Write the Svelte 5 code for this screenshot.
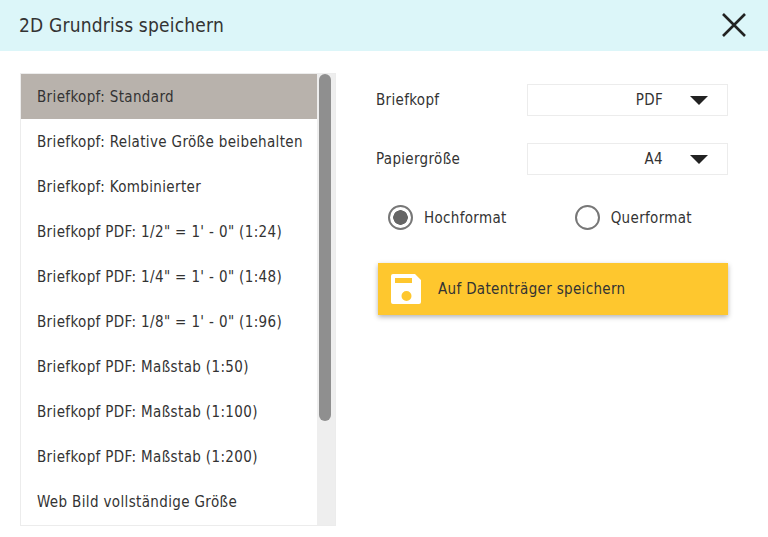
<script lang="ts">
  const templates = [
    "Briefkopf: Standard",
    "Briefkopf: Relative Größe beibehalten",
    "Briefkopf: Kombinierter",
    "Briefkopf PDF: 1/2\" = 1' - 0\" (1:24)",
    "Briefkopf PDF: 1/4\" = 1' - 0\" (1:48)",
    "Briefkopf PDF: 1/8\" = 1' - 0\" (1:96)",
    "Briefkopf PDF: Maßstab (1:50)",
    "Briefkopf PDF: Maßstab (1:100)",
    "Briefkopf PDF: Maßstab (1:200)",
    "Web Bild vollständige Größe",
  ];

  let selected = $state(0);
  let orientation = $state("portrait");
</script>

<div class="dialog">
  <header class="title-bar">
    <h1>2D Grundriss speichern</h1>
    <button type="button" class="close" aria-label="Schließen">
      <svg width="26" height="26" viewBox="0 0 26 26">
        <path d="M2 2 L24 24 M24 2 L2 24" fill="none" stroke="#222" stroke-width="2.6" />
      </svg>
    </button>
  </header>

  <main class="body">
    <div class="list">
      <ul>
        {#each templates as name, i}
          <li class:selected={selected === i}>
            <button type="button" onclick={() => (selected = i)}>{name}</button>
          </li>
        {/each}
      </ul>
      <div class="track">
        <div class="thumb"></div>
      </div>
    </div>

    <section class="options">
      <div class="field">
        <span class="label">Briefkopf</span>
        <div class="select">
          <span class="value">PDF</span>
          <span class="arrow"></span>
        </div>
      </div>
      <div class="field">
        <span class="label">Papiergröße</span>
        <div class="select">
          <span class="value">A4</span>
          <span class="arrow"></span>
        </div>
      </div>

      <div class="radios">
        <button type="button" class="radio" onclick={() => (orientation = "portrait")}>
          <span class="ring" class:on={orientation === "portrait"}></span>
          Hochformat
        </button>
        <button type="button" class="radio" onclick={() => (orientation = "landscape")}>
          <span class="ring" class:on={orientation === "landscape"}></span>
          Querformat
        </button>
      </div>

      <button type="button" class="save">
        <svg width="30" height="30" viewBox="0 0 30 30">
          <path
            fill="#fff"
            fill-rule="evenodd"
            d="M2 0 H24 L30 6 V28 Q30 30 28 30 H2 Q0 30 0 28 V2 Q0 0 2 0 Z M4 4 V9 H21 V4 Z M15.5 17 A5 5 0 1 0 15.5 27 A5 5 0 1 0 15.5 17 Z"
          />
        </svg>
        Auf Datenträger speichern
      </button>
    </section>
  </main>
</div>

<style>
  :global(body) {
    background: #fff;
  }

  .dialog {
    width: 768px;
    height: 537px;
    overflow: hidden;
    font-family: "DejaVu Sans Condensed", "DejaVu Sans", sans-serif;
    font-stretch: condensed;
    font-size: 15px;
    letter-spacing: 0.33px;
    color: #333;
  }

  button {
    font: inherit;
    letter-spacing: inherit;
    color: inherit;
    border: none;
    background: none;
    padding: 0;
  }

  .title-bar {
    height: 51px;
    box-sizing: border-box;
    padding: 0 21px 1px 19px;
    background: #dcf6f9;
    display: flex;
    align-items: center;
    justify-content: space-between;
  }

  h1 {
    margin: 0 0 1px;
    font-size: 19px;
    font-weight: 400;
    letter-spacing: 0.2px;
  }

  .close {
    display: flex;
  }

  .body {
    display: flex;
    padding: 22px 40px 0 20px;
    gap: 40px;
  }

  .list {
    width: 316px;
    height: 453px;
    box-sizing: border-box;
    border: 1px solid #ececec;
    display: flex;
    overflow: hidden;
  }

  ul {
    list-style: none;
    margin: 0;
    padding: 0;
    flex: 1;
  }

  li {
    height: 45px;
  }

  li button {
    width: 100%;
    height: 100%;
    padding: 0 0 0 16px;
    text-align: left;
    white-space: nowrap;
    letter-spacing: 0.36px;
  }

  li.selected {
    background: #b8b2ac;
  }

  .track {
    width: 18px;
    background: #eee;
    padding: 0 4px 0 2px;
    box-sizing: border-box;
  }

  .thumb {
    height: 347px;
    background: #8f8f8f;
    border-radius: 6px;
  }

  .options {
    width: 352px;
    padding-top: 11px;
    display: flex;
    flex-direction: column;
  }

  .field {
    display: flex;
    align-items: center;
    justify-content: space-between;
    margin-bottom: 27px;
  }

  .select {
    width: 201px;
    height: 32px;
    box-sizing: border-box;
    border: 1px solid #ececec;
    display: flex;
    align-items: center;
    justify-content: flex-end;
    padding-right: 19px;
    gap: 27px;
  }

  .arrow {
    width: 0;
    height: 0;
    border-left: 9px solid transparent;
    border-right: 9px solid transparent;
    border-top: 9px solid #222;
  }

  .radios {
    display: flex;
    gap: 68px;
    padding-left: 12px;
    margin-top: 3px;
  }

  .radio {
    display: flex;
    align-items: center;
    gap: 11px;
  }

  .ring {
    width: 25px;
    height: 25px;
    box-sizing: border-box;
    border: 2px solid #777;
    border-radius: 50%;
    display: block;
  }

  .ring.on {
    background: radial-gradient(circle, #666 0 7px, transparent 7.5px);
  }

  .save {
    margin-top: 33px;
    margin-left: 2px;
    height: 52px;
    background: #fec72e;
    box-shadow: 0 2px 5px rgba(0, 0, 0, 0.3);
    display: flex;
    align-items: center;
    gap: 17px;
    padding-left: 13px;
    text-align: left;
  }
</style>
